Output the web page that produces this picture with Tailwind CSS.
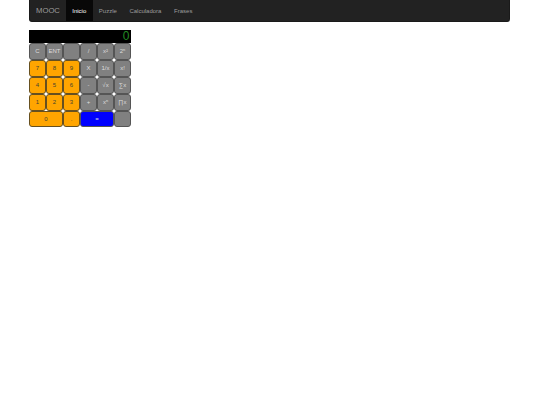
<!DOCTYPE html>
<html lang="en">
<head>
    <meta charset="UTF-8">
    <title>MOOC - Calculadora</title>
    <script src="https://cdn.jsdelivr.net/npm/@tailwindcss/browser@4"></script>
</head>
<body class="bg-white font-['Liberation_Sans',sans-serif]">
    <!-- Navbar -->
    <nav class="ml-[29px] w-[481px] h-[22px] flex items-center bg-[#222] border border-t-0 border-[#1a1a1a] rounded-b-[3px]">
        <a class="pl-[6px] pr-[6px] pt-[1px] text-[7.7px] text-[#9d9d9d]">MOOC</a>
        <a class="h-full flex items-center px-[6.3px] pt-[1px] text-[6px] bg-[#080808] text-white">Inicio</a>
        <a class="px-[6.3px] pt-[1px] text-[6px] text-[#9d9d9d]">Puzzle</a>
        <a class="px-[6.3px] pt-[1px] text-[6px] text-[#9d9d9d]">Calculadora</a>
        <a class="px-[6.3px] pt-[1px] text-[6px] text-[#9d9d9d]">Frases</a>
    </nav>

    <!-- Calculator -->
    <section class="ml-[29px] mt-[8px] w-[102px]">
        <div class="h-[13px] bg-black text-right text-[12px] leading-[13px] text-[#228b22] pr-[1.5px]">0</div>
        <div class="grid grid-cols-6 auto-rows-[16.9px] text-[6px] text-center">
            <button class="bg-[#808080] text-[#ddd] border border-[#555] rounded-[3px]">C</button>
            <button class="bg-[#808080] text-[#ddd] border border-[#555] rounded-[3px]">ENT</button>
            <button class="bg-[#808080] text-[#ddd] border border-[#555] rounded-[3px]"></button>
            <button class="bg-[#808080] text-[#ddd] border border-[#555] rounded-[3px]">/</button>
            <button class="bg-[#808080] text-[#ddd] border border-[#555] rounded-[3px]">x²</button>
            <button class="bg-[#808080] text-[#ddd] border border-[#555] rounded-[3px]">2ⁿ</button>

            <button class="bg-[#ffa500] text-[#443] border border-[#665020] rounded-[3px]">7</button>
            <button class="bg-[#ffa500] text-[#443] border border-[#665020] rounded-[3px]">8</button>
            <button class="bg-[#ffa500] text-[#443] border border-[#665020] rounded-[3px]">9</button>
            <button class="bg-[#808080] text-[#ddd] border border-[#555] rounded-[3px]">X</button>
            <button class="bg-[#808080] text-[#ddd] border border-[#555] rounded-[3px]">1/x</button>
            <button class="bg-[#808080] text-[#ddd] border border-[#555] rounded-[3px]">x!</button>

            <button class="bg-[#ffa500] text-[#443] border border-[#665020] rounded-[3px]">4</button>
            <button class="bg-[#ffa500] text-[#443] border border-[#665020] rounded-[3px]">5</button>
            <button class="bg-[#ffa500] text-[#443] border border-[#665020] rounded-[3px]">6</button>
            <button class="bg-[#808080] text-[#ddd] border border-[#555] rounded-[3px]">-</button>
            <button class="bg-[#808080] text-[#ddd] border border-[#555] rounded-[3px]">√x</button>
            <button class="bg-[#808080] text-[#ddd] border border-[#555] rounded-[3px]">∑x</button>

            <button class="bg-[#ffa500] text-[#443] border border-[#665020] rounded-[3px]">1</button>
            <button class="bg-[#ffa500] text-[#443] border border-[#665020] rounded-[3px]">2</button>
            <button class="bg-[#ffa500] text-[#443] border border-[#665020] rounded-[3px]">3</button>
            <button class="bg-[#808080] text-[#ddd] border border-[#555] rounded-[3px]">+</button>
            <button class="bg-[#808080] text-[#ddd] border border-[#555] rounded-[3px]">xⁿ</button>
            <button class="bg-[#808080] text-[#ddd] border border-[#555] rounded-[3px]">∏x</button>

            <button class="col-span-2 bg-[#ffa500] text-[#443] border border-[#665020] rounded-[3px]">0</button>
            <button class="bg-[#ffa500] text-[#443] border border-[#665020] rounded-[3px]">.</button>
            <button class="col-span-2 bg-[#0000ff] text-[#ddd] border border-[#555] rounded-[3px]">=</button>
            <button class="bg-[#808080] text-[#ddd] border border-[#555] rounded-[3px]"></button>
        </div>
    </section>
</body>
</html>
